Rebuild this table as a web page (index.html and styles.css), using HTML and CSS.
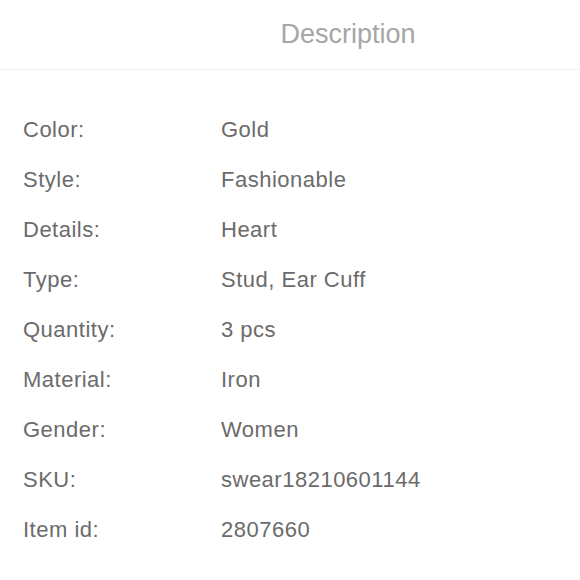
FILE: index.html
```html
<!DOCTYPE html>
<html lang="en">
<head>
    <meta charset="UTF-8">
    <meta name="viewport" content="width=device-width, initial-scale=1.0">
    <title>Description</title>
    <link rel="stylesheet" href="styles.css">
</head>
<body>

<div class="header">
    <span class="title">Description</span>
</div>

<div class="specs">
    <div class="row"><span class="label">Color:</span><span class="value">Gold</span></div>
    <div class="row"><span class="label">Style:</span><span class="value">Fashionable</span></div>
    <div class="row"><span class="label">Details:</span><span class="value">Heart</span></div>
    <div class="row"><span class="label">Type:</span><span class="value">Stud, Ear Cuff</span></div>
    <div class="row"><span class="label">Quantity:</span><span class="value">3 pcs</span></div>
    <div class="row"><span class="label">Material:</span><span class="value">Iron</span></div>
    <div class="row"><span class="label">Gender:</span><span class="value">Women</span></div>
    <div class="row"><span class="label">SKU:</span><span class="value">swear18210601144</span></div>
    <div class="row"><span class="label">Item id:</span><span class="value">2807660</span></div>
</div>

</body>
</html>
```

FILE: styles.css
```css
body {
    font-family: "Liberation Sans", Arial, sans-serif;
    background-color: #fff;
    color: #6b6b6b;
    margin: 0;
    padding: 0;
}

.header {
    height: 69px;
    border-bottom: 1px solid #f0f0f0;
    display: flex;
    align-items: center;
    justify-content: center;
    padding-left: 116px;
}

.title {
    font-size: 27px;
    color: #a6a6a6;
}

.specs {
    padding: 35px 0 0 23px;
}

.row {
    display: flex;
    align-items: center;
    height: 50px;
    font-size: 22px;
    letter-spacing: 0.5px;
}

.label {
    width: 198px;
}
```
